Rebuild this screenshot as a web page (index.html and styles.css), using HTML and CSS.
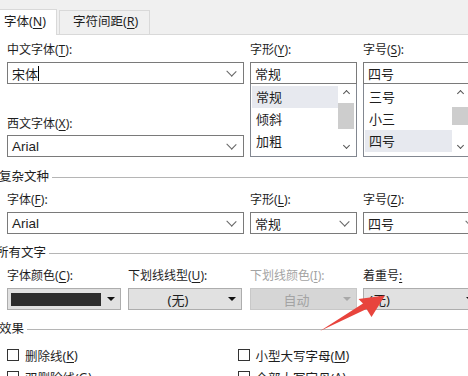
FILE: index.html
```html
<!DOCTYPE html>
<html lang="zh-CN">
<head>
    <meta charset="UTF-8">
    <title>字体</title>
    <link rel="stylesheet" href="styles.css">
</head>
<body>
    <div class="tabs">
        <div class="tab active">字体(<u>N</u>)</div>
        <div class="tab">字符间距(<u>R</u>)</div>
    </div>

    <div class="page">
        <div class="row">
            <div class="col c1">
                <div class="label">中文字体(<u>T</u>):</div>
                <div class="combo"><span class="value">宋体<i class="cursor"></i></span><span class="chev"></span></div>
                <div class="label gap">西文字体(<u>X</u>):</div>
                <div class="combo"><span class="value latin">Arial</span><span class="chev"></span></div>
            </div>
            <div class="col c2">
                <div class="label">字形(<u>Y</u>):</div>
                <div class="field">常规</div>
                <div class="listbox">
                    <div class="items">
                        <div class="item selected">常规</div>
                        <div class="item">倾斜</div>
                        <div class="item">加粗</div>
                    </div>
                    <div class="scroll">
                        <span class="arrow up"></span>
                        <span class="thumb t1"></span>
                        <span class="arrow down"></span>
                    </div>
                </div>
            </div>
            <div class="col c3">
                <div class="label">字号(<u>S</u>):</div>
                <div class="field">四号</div>
                <div class="listbox">
                    <div class="items">
                        <div class="item">三号</div>
                        <div class="item">小三</div>
                        <div class="item selected">四号</div>
                    </div>
                    <div class="scroll">
                        <span class="arrow up"></span>
                        <span class="thumb t2"></span>
                        <span class="arrow down"></span>
                    </div>
                </div>
            </div>
        </div>

        <div class="group first"><span>复杂文种</span></div>
        <div class="row">
            <div class="col c1">
                <div class="label">字体(<u>F</u>):</div>
                <div class="combo"><span class="value latin">Arial</span><span class="chev"></span></div>
            </div>
            <div class="col c2">
                <div class="label">字形(<u>L</u>):</div>
                <div class="combo"><span class="value">常规</span><span class="chev"></span></div>
            </div>
            <div class="col c3">
                <div class="label">字号(<u>Z</u>):</div>
                <div class="combo"><span class="value">四号</span><span class="chev"></span></div>
            </div>
        </div>

        <div class="group all"><span>所有文字</span></div>
        <div class="row four">
            <div class="col d1">
                <div class="label">字体颜色(<u>C</u>):</div>
                <div class="button"><span class="swatch"></span><span class="tri"></span></div>
            </div>
            <div class="col d2">
                <div class="label">下划线线型(<u>U</u>):</div>
                <div class="button"><span class="btext">(无)</span><span class="tri"></span></div>
            </div>
            <div class="col d3 disabled">
                <div class="label">下划线颜色(<u>I</u>):</div>
                <div class="button"><span class="btext">自动</span><span class="tri"></span></div>
            </div>
            <div class="col d4">
                <div class="label">着重号<u>:</u></div>
                <div class="button"><span class="btext left">(无)</span><span class="tri"></span></div>
            </div>
        </div>

        <div class="group"><span>效果</span></div>
        <div class="checks">
            <div class="check-col">
                <div class="check"><span class="box"></span>删除线(<u>K</u>)</div>
                <div class="check"><span class="box"></span>双删除线(<u>G</u>)</div>
            </div>
            <div class="check-col">
                <div class="check"><span class="box"></span>小型大写字母(<u>M</u>)</div>
                <div class="check"><span class="box"></span>全部大写字母(<u>A</u>)</div>
            </div>
        </div>
    </div>

    <!-- annotation arrow drawn over the dialog -->
    <svg class="pointer" width="468" height="376" viewBox="0 0 468 376">
        <polygon points="320,331 363,303.5 358.5,299 385,295.5 371.5,317 366.5,309" fill="#e8443d"/>
    </svg>
</body>
</html>
```

FILE: styles.css
```css
body {
    margin: 0;
    width: 468px;
    height: 376px;
    overflow: hidden;
    position: relative;
    background-color: #fff;
    color: #1e1e1e;
    font-family: "Noto Sans", "Noto Sans CJK SC", sans-serif;
    font-size: 12px;
}

u {
    text-decoration-thickness: 1px;
    text-underline-offset: 2px;
}

/* Tab strip */
.tabs {
    height: 34px;
    background-color: #f0f0f0;
    border-bottom: 1px solid #d9d9d9;
    display: flex;
    align-items: flex-end;
}

.tab {
    height: 23px;
    line-height: 22px;
    padding: 0 11px 0 13px;
    border: 1px solid #d9d9d9;
    border-bottom: none;
    margin-left: 2px;
    font-size: 12.5px;
}

.tab.active {
    height: 25px;
    line-height: 24px;
    margin-left: -4px;
    margin-bottom: -1px;
    padding: 0 10px 0 7px;
    background-color: #fff;
}

/* Main page */
.page {
    padding-left: 7px;
}

.row {
    display: flex;
    gap: 6px;
    width: 490px;
}

.row:first-child {
    padding-top: 7px;
}

.col {
    display: flex;
    flex-direction: column;
}

.c1 { width: 237px; }
.c2 { width: 107px; }
.c3 { width: 120px; }

.label {
    height: 16px;
    line-height: 16px;
    margin-bottom: 4px;
    white-space: nowrap;
}

.label.gap {
    margin-top: 32px;
    margin-bottom: 3px;
}

.combo,
.field {
    box-sizing: border-box;
    height: 22px;
    border: 1px solid #7a7a7a;
    background-color: #fff;
    display: flex;
    align-items: center;
    font-size: 13px;
}

.field {
    padding-left: 4px;
}

.value {
    flex: 1;
    padding-left: 4px;
    display: flex;
    align-items: center;
}

.value.latin {
    font-family: "Liberation Sans", Arial, sans-serif;
    font-size: 13.5px;
}

.cursor {
    display: inline-block;
    width: 1px;
    height: 15px;
    background-color: #000;
}

.chev {
    width: 6px;
    height: 6px;
    border-right: 1px solid #666;
    border-bottom: 1px solid #666;
    transform: rotate(45deg) scaleX(1.1);
    margin: 0 8px 4px 0;
}

/* List boxes under 字形 / 字号 */
.listbox {
    box-sizing: border-box;
    height: 73px;
    border: 1px solid #828790;
    border-top: none;
    display: flex;
}

.items {
    flex: 1;
    padding-top: 2px;
}

.item {
    height: 22px;
    line-height: 22px;
    padding-left: 4px;
    margin-left: 1px;
    font-size: 13px;
}

.item.selected {
    background-color: #e7e9ef;
}

.scroll {
    width: 16px;
    margin: 1px 2px 1px 0;
    display: flex;
    flex-direction: column;
    align-items: center;
    position: relative;
}

.c3 .scroll {
    margin-right: 14px;
}

.arrow {
    width: 4px;
    height: 4px;
    border-left: 1.5px solid #555;
    border-top: 1.5px solid #555;
    margin-top: 6px;
    transform: rotate(45deg);
}

.arrow.down {
    margin-top: auto;
    margin-bottom: 7px;
    transform: rotate(225deg);
}

.thumb {
    position: absolute;
    left: 0;
    width: 16px;
    background-color: #cdcdcd;
}

.t1 { top: 18px; height: 26px; }
.t2 { top: 22px; height: 18px; }

/* Group headers with the rule */
.group {
    display: flex;
    align-items: center;
    height: 16px;
    margin: 11px 0 7px -8px;
    width: 480px;
    line-height: 16px;
    font-size: 12.5px;
}

.group.first {
    margin-top: 12px;
}

.group.all {
    margin-left: -11px;
}

.group::after {
    content: "";
    flex: 1;
    height: 1px;
    margin-left: 3px;
    background-color: #b5b5b5;
}

/* Row of drop-down buttons */
.row.four {
    gap: 0;
}

.d1 { width: 114px; margin-right: 7px; }
.d2 { width: 114px; margin-right: 8px; }
.d3 { width: 107px; margin-right: 6px; }
.d4 { width: 120px; }

.button {
    box-sizing: border-box;
    height: 22px;
    border: 1px solid #adadad;
    background-color: #e1e1e1;
    display: flex;
    align-items: center;
    position: relative;
    font-size: 13px;
}

.swatch {
    width: 90px;
    height: 13px;
    margin-left: 3px;
    background-color: #2d2d2d;
}

.btext {
    flex: 1;
    text-align: center;
    padding-right: 14px;
}

.btext.left {
    text-align: left;
    padding-left: 5px;
}

.tri {
    width: 0;
    height: 0;
    border-left: 4px solid transparent;
    border-right: 4px solid transparent;
    border-top: 4px solid #111;
    position: absolute;
    right: 5px;
    top: 8px;
}

.d4 .tri {
    right: 8px;
}

.disabled .label {
    color: #a3a3a3;
}

.disabled .button {
    background-color: #d6d6d6;
    border-color: #c8c8c8;
    color: #a3a3a3;
}

.disabled .tri {
    border-top-color: #a8a8a8;
}

/* Effects checkboxes */
.checks {
    display: flex;
    padding-top: 4px;
}

.check-col {
    width: 231px;
    display: flex;
    flex-direction: column;
    gap: 8px;
}

.check {
    display: flex;
    align-items: center;
    height: 14px;
    font-size: 12.5px;
    white-space: nowrap;
}

.box {
    box-sizing: border-box;
    width: 12px;
    height: 12px;
    border: 1px solid #333;
    background-color: #fff;
    margin-right: 6px;
}

.pointer {
    position: absolute;
    left: 0;
    top: 0;
    pointer-events: none;
}
```
